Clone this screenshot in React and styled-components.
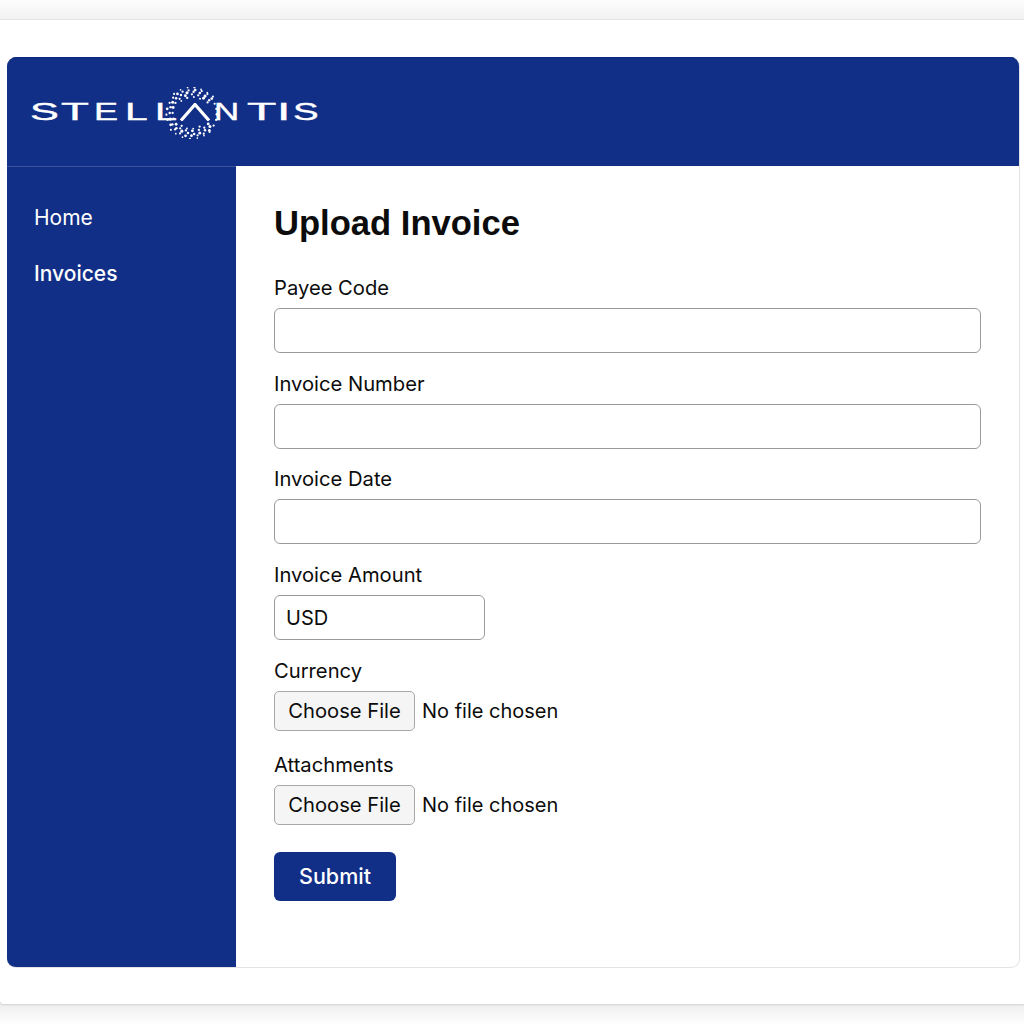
import React from 'react';
import styled, { createGlobalStyle } from 'styled-components';

const GlobalStyle = createGlobalStyle`
  html, body {
    margin: 0;
    padding: 0;
    background: #fff;
    font-family: "Inter", "Liberation Sans", Arial, sans-serif;
    color: #0c0c0c;
  }
  * { box-sizing: border-box; }
`;

// rings of dots round the chevron, a little uneven like the real mark
const dots = [];
[
  { r: 17, n: 17, s: 1.1 },
  { r: 19.8, n: 20, s: 1.35 },
  { r: 22.6, n: 23, s: 1.45 },
  { r: 25.2, n: 25, s: 1.3 },
  { r: 27.6, n: 24, s: 1.0 },
].forEach((ring, k) => {
  for (let i = 0; i < ring.n; i++) {
    const a = (i / ring.n) * Math.PI * 2 + k * 0.61;
    const c = Math.cos(a);
    // the band gets thin where the letters pass through it
    if (k === 0 && Math.abs(c) > 0.7) continue;
    if (k === 4 && Math.abs(c) > 0.8) continue;
    if (k < 3 && c > 0.88) continue;
    dots.push({
      x: 28 + c * ring.r + Math.sin(i * 7.3) * 0.45,
      y: 26 + Math.sin(a) * ring.r * 0.92 + Math.cos(i * 5.1) * 0.45,
      r: ring.s * (i % 3 === 0 ? 1.05 : 0.85),
    });
  }
});

const Logo = () => (
  <LogoWrap aria-label="Stellantis">
    <LogoMark width="56" height="52" viewBox="0 0 56 52" aria-hidden="true">
      {dots.map((d, i) => (
        <circle key={i} cx={d.x} cy={d.y} r={d.r} fill="#fff" />
      ))}
    </LogoMark>
    <LogoLetter $w={31} $sx={1.8}>S</LogoLetter>
    <LogoLetter $w={33} $sx={1.9}>T</LogoLetter>
    <LogoLetter $w={31} $sx={1.5}>E</LogoLetter>
    <LogoLetter $w={30} $sx={1.7}>L</LogoLetter>
    <LogoLetter $w={25} $sx={1.65}>L</LogoLetter>
    <LogoChevron width="30" height="18" viewBox="0 0 30 18" aria-hidden="true">
      <path d="M1 17.5 L15 1.5 L29 17.5" fill="none" stroke="#fff" strokeWidth="3.2" />
    </LogoChevron>
    <LogoLetter $w={33} $sx={1.45}>N</LogoLetter>
    <LogoLetter $w={30} $sx={2}>T</LogoLetter>
    <LogoLetter $w={16} $sx={2}>I</LogoLetter>
    <LogoLetter $w={24} $sx={1.6}>S</LogoLetter>
  </LogoWrap>
);

const TextField = ({ label, short, value }) => (
  <Field>
    <Label>{label}</Label>
    <Input $short={short} type="text" defaultValue={value} />
  </Field>
);

const FileField = ({ label }) => (
  <FileBlock>
    <Label>{label}</Label>
    <FileRow>
      <FileButton type="button">Choose File</FileButton>
      <FileName>No file chosen</FileName>
    </FileRow>
  </FileBlock>
);

const App = () => (
  <>
    <GlobalStyle />
    <Page>
      <Sheet>
        <Card>
          <Header>
            <Logo />
          </Header>
          <Body>
            <Sidebar>
              <NavLink>Home</NavLink>
              <NavLink $active>Invoices</NavLink>
            </Sidebar>
            <Main>
              <Title>Upload Invoice</Title>
              <TextField label="Payee Code" />
              <TextField label="Invoice Number" />
              <TextField label="Invoice Date" />
              <TextField label="Invoice Amount" short value="USD" />
              <FileField label="Currency" />
              <FileField label="Attachments" />
              <SubmitButton type="button">Submit</SubmitButton>
            </Main>
          </Body>
        </Card>
      </Sheet>
    </Page>
  </>
);

const Page = styled.div`
  height: 1024px;
  padding-top: 19px;
  overflow: hidden;
  background: linear-gradient(#fdfdfd, #f1f1f1 19px, #eeeeee 1004px, #fefefe 1024px);
`;

const Sheet = styled.div`
  height: 985px;
  padding: 37px 4px 36px 7px;
  background: #fff;
  border-top: 1px solid #e4e4e4;
  border-bottom-left-radius: 4px;
  box-shadow: 0 1px 2px rgba(0, 0, 0, 0.12);
`;

const Card = styled.div`
  height: 911px;
  display: flex;
  flex-direction: column;
  border: 1px solid #e3e3e3;
  border-left: 0;
  border-top: 0;
  border-radius: 9px;
  overflow: hidden;
  background: #fff;
`;

const Header = styled.header`
  flex: 0 0 109px;
  display: flex;
  align-items: center;
  padding-left: 23px;
  background: #122f87;
  border-top: 1px solid #0b2880;
`;

const LogoWrap = styled.div`
  position: relative;
  display: flex;
  align-items: center;
  height: 52px;
`;

const LogoMark = styled.svg`
  position: absolute;
  left: 134px;
  top: 1px;
`;

const LogoLetter = styled.span`
  position: relative;
  display: block;
  width: ${(p) => p.$w}px;
  font-family: "Liberation Sans", Arial, sans-serif;
  font-size: 24px;
  line-height: 24px;
  color: #fff;
  -webkit-text-stroke: 0.4px #fff;
  transform-origin: left center;
  transform: scaleX(${(p) => p.$sx});
`;

const LogoChevron = styled.svg`
  position: relative;
  margin-right: 4px;
`;

const Body = styled.div`
  flex: 1;
  display: flex;
  min-height: 0;
`;

const Sidebar = styled.nav`
  flex: 0 0 229px;
  display: flex;
  flex-direction: column;
  gap: 30px;
  padding: 38px 0 0 27px;
  background: #122f87;
  border-top: 1px solid #3a5399;
`;

const NavLink = styled.a`
  font-size: 21px;
  line-height: 26px;
  color: #fff;
  font-weight: ${(p) => (p.$active ? 500 : 400)};
`;

const Main = styled.main`
  flex: 1;
  padding: 36px 38px 0 38px;
`;

const Title = styled.h1`
  margin: 0 0 32px;
  font-family: "Liberation Sans", Arial, sans-serif;
  font-size: 34.6px;
  line-height: 42px;
  font-weight: 700;
  color: #0c0c0c;
`;

const Field = styled.div`
  display: flex;
  flex-direction: column;
  align-items: flex-start;
  margin-bottom: 18.7px;
`;

const Label = styled.label`
  display: block;
  margin-bottom: 8px;
  font-size: 20.2px;
  line-height: 24px;
  color: #0c0c0c;
`;

const Input = styled.input`
  display: block;
  width: ${(p) => (p.$short ? '211px' : '100%')};
  height: 45px;
  padding: 0 11px;
  font-family: inherit;
  font-size: 20px;
  color: #0c0c0c;
  background: #fff;
  border: 1.5px solid #9a9a9a;
  border-radius: 6px;
  outline: none;
`;

const FileBlock = styled.div`
  margin-bottom: 22px;
`;

const FileRow = styled.div`
  display: flex;
  align-items: center;
  gap: 7px;
`;

const FileButton = styled.button`
  width: 141px;
  height: 40px;
  padding: 0;
  font-family: inherit;
  font-size: 20.2px;
  color: #0c0c0c;
  background: #f5f5f5;
  border: 1.5px solid #a8a8a8;
  border-radius: 5px;
`;

const FileName = styled.span`
  font-size: 20px;
  color: #0c0c0c;
`;

const SubmitButton = styled.button`
  display: block;
  width: 122px;
  height: 49px;
  margin-top: 27px;
  padding: 0;
  font-family: inherit;
  font-size: 21.5px;
  font-weight: 500;
  color: #fff;
  background: #122f87;
  border: 0;
  border-radius: 6px;
`;

export default App;
